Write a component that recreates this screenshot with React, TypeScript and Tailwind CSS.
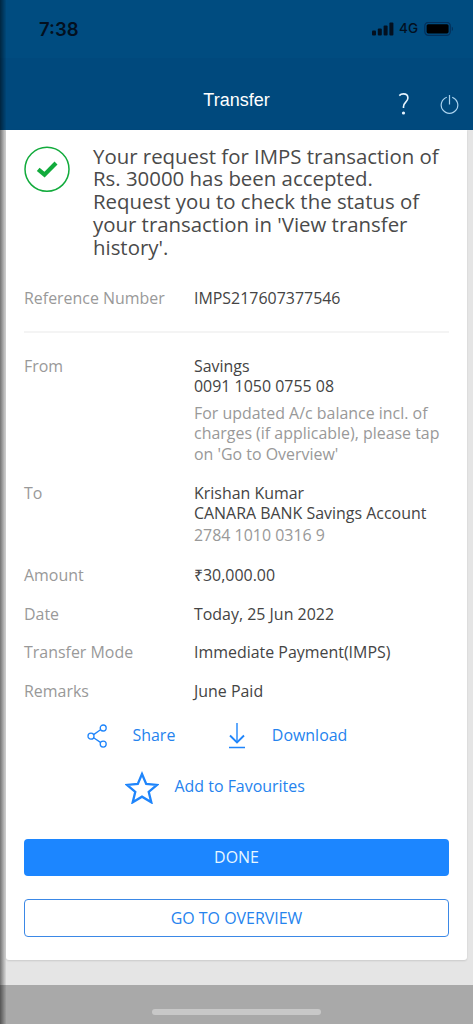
import type { ReactNode } from "react";

interface DetailRowProps {
  label: string;
  children: ReactNode;
  className?: string;
}

const DetailRow = ({ label, children, className = "" }: DetailRowProps) => (
  <div className={`flex leading-[20.5px] ${className}`}>
    <div className="w-[170px] shrink-0 text-[#999]">{label}</div>
    <div className="flex-1 whitespace-nowrap text-[#444]">{children}</div>
  </div>
);

const StatusBar = () => (
  <div className="flex h-[58px] items-center justify-between pl-[39px] pr-[19px] text-[#03101f]">
    <span className="font-['Inter'] text-[18.5px] font-semibold leading-none">
      7:38
    </span>
    <div className="flex items-center">
      <svg width="22" height="14" viewBox="0 0 22 14" fill="currentColor">
        <rect x="0" y="8.5" width="4" height="5" rx="1" />
        <rect x="5.8" y="6.5" width="4" height="7" rx="1" />
        <rect x="11.6" y="3.5" width="4" height="10" rx="1" />
        <rect x="17.4" y="0.5" width="4" height="13" rx="1" />
      </svg>
      <span className="ml-[5px] font-['Inter'] text-[13.5px] font-medium leading-none">
        4G
      </span>
      <svg className="ml-1.5" width="30" height="15" viewBox="0 0 30 15">
        <rect
          x="0.8"
          y="0.3"
          width="25.5"
          height="13"
          rx="3.6"
          fill="none"
          stroke="#03305a"
          strokeWidth="1.2"
        />
        <rect x="2.6" y="2.2" width="22" height="9.2" rx="1.6" fill="#000" />
        <path d="M27.8 4.7v4.4c1.6-.6 1.6-3.8 0-4.4z" fill="#03305a" />
      </svg>
    </div>
  </div>
);

const Header = () => (
  <header className="h-[130px] shrink-0 bg-[#004c80]">
    <StatusBar />
    <div className="grid h-[72px] grid-cols-[1fr_auto_1fr] items-start bg-[#00497d] pt-[31px]">
      <span />
      <h1 className="font-['Liberation_Sans'] text-[18px] leading-[22px] text-white">
        Transfer
      </h1>
      <div className="flex justify-end pr-[14px]">
        <svg
          className="mr-[30px] mt-[4px]"
          width="12"
          height="23"
          viewBox="0 0 12 23"
          fill="none"
          stroke="#e6f4ff"
          strokeWidth="1.6"
        >
          <path d="M1.3 2.6C2.4 1.4 3.8.9 5.4.9c2.7 0 4.5 1.5 4.5 4 0 4.1-4.4 4.3-4.4 8.6v1.5" />
          <circle cx="5.5" cy="20" r="1.6" fill="#e6f4ff" stroke="none" />
        </svg>
        <svg
          className="mt-[6px]"
          width="19"
          height="20"
          viewBox="0 0 19 20"
          fill="none"
          stroke="#a9d2ee"
          strokeWidth="1.2"
        >
          <path d="M6.8 2.2a8.3 8.3 0 1 0 5.4 0M9.5 0v9.5" />
        </svg>
      </div>
    </div>
  </header>
);

const ShareIcon = () => (
  <svg
    width="21"
    height="25"
    viewBox="0 0 21 25"
    fill="none"
    stroke="#1f85fb"
    strokeWidth="1.3"
  >
    <circle cx="4" cy="12.2" r="3" />
    <circle cx="16.2" cy="4" r="3" />
    <circle cx="16.2" cy="20.1" r="3" />
    <path d="M6.6 10.6l6.9-4.9M6.6 13.7l6.9 4.7" />
  </svg>
);

const DownloadIcon = () => (
  <svg
    width="18"
    height="27"
    viewBox="0 0 18 27"
    fill="none"
    stroke="#1f85fb"
    strokeWidth="1.4"
  >
    <path d="M9 0v19.500M1 24.500h16" />
    <path d="M2 12.500l7 7 7-7" strokeWidth="1.9" />
  </svg>
);

const StarIcon = () => (
  <svg
    width="34"
    height="33"
    viewBox="0 0 34 33"
    fill="none"
    stroke="#1f85fb"
    strokeWidth="2.3"
  >
    <path d="M17 3l4.2 10 10.8.9-8.3 7 2.6 10.4L17 25.7l-9.3 5.6 2.6-10.4-8.3-7 10.8-.9z" />
  </svg>
);

const App = () => {
  return (
    <div className="relative flex h-[1024px] w-[473px] flex-col overflow-hidden bg-[#e5e5e5] font-['Open_Sans',sans-serif] text-[15.95px]">
      <Header />

      <main className="ml-[6px] mr-[6px] h-[830px] shrink-0 rounded-b-[3px] bg-white px-[18px] shadow-[0_1px_2px_rgba(0,0,0,0.12)]">
        {/* Confirmation message */}
        <div className="flex pt-[15px]">
          <svg
            className="mt-px shrink-0"
            width="46"
            height="47"
            viewBox="0 0 46 47"
            fill="none"
            stroke="#12ab3c"
          >
            <circle cx="23" cy="23.3" r="22" strokeWidth="1.5" />
            <path d="M14.2 23.3l6.3 5.4 11.5-11.7" strokeWidth="4.2" />
          </svg>
          <p className="-mt-[0.4px] ml-[23px] whitespace-nowrap text-[20.4px] leading-[22.75px] text-[#4a4a4a]">
            Your request for IMPS transaction of
            <br />
            Rs. 30000 has been accepted.
            <br />
            Request you to check the status of
            <br />
            your transaction in 'View transfer
            <br />
            history'.
          </p>
        </div>

        <DetailRow label="Reference Number" className="mt-[29.9px]">
          IMPS217607377546
        </DetailRow>
        <div className="mt-[22.5px] h-[2px] bg-[#f4f4f4]" />

        {/* Transfer details */}
        <DetailRow label="From" className="mt-[22.5px]">
          <p>Savings</p>
          <p>0091 1050 0755 08</p>
          <p className="mt-[6px] text-[#999]">
            For updated A/c balance incl. of
            <br />
            charges (if applicable), please tap
            <br />
            on 'Go to Overview'
          </p>
        </DetailRow>
        <DetailRow label="To" className="mt-[18.5px]">
          <p>Krishan Kumar</p>
          <p>CANARA BANK Savings Account</p>
          <p className="mt-px text-[#999]">2784 1010 0316 9</p>
        </DetailRow>
        <div className="mt-[19.8px] flex flex-col gap-[18.2px]">
          <DetailRow label="Amount">₹30,000.00</DetailRow>
          <DetailRow label="Date">Today, 25 Jun 2022</DetailRow>
          <DetailRow label="Transfer Mode">Immediate Payment(IMPS)</DetailRow>
          <DetailRow label="Remarks">June Paid</DetailRow>
        </div>

        {/* Actions */}
        <div className="mt-[20.6px] flex h-[28px] items-center pl-[63px] text-[#2583ee]">
          <button className="flex items-center gap-[24.5px]">
            <ShareIcon />
            Share
          </button>
          <button className="ml-[52.5px] flex items-center gap-[26px]">
            <DownloadIcon />
            Download
          </button>
        </div>
        <button className="mt-[19.8px] flex h-[34px] items-center gap-[15.5px] pl-[101px] text-[#2583ee]">
          <StarIcon />
          <span className="-mt-px">Add to Favourites</span>
        </button>

        <button className="mt-[35px] block h-[37px] w-full rounded-[4px] bg-[#1c86ff] leading-[35px] text-[#e6f7ff]">
          DONE
        </button>
        <button className="mt-[23px] block h-[38px] w-full rounded-[4px] border border-[#3b88e6] leading-[36px] text-[#2583ee]">
          GO TO OVERVIEW
        </button>
      </main>

      {/* Home indicator bar */}
      <footer className="mt-auto flex h-[39px] shrink-0 justify-center bg-[#a9a9a9] pt-[24px]">
        <div className="h-[6px] w-[169px] rounded-full bg-[#c8c8c8]" />
      </footer>

      {/* Shadow along the left edge */}
      <div className="pointer-events-none absolute inset-y-0 left-0 w-[6px] bg-gradient-to-r from-black/50 to-black/5" />
    </div>
  );
};

export default App;
